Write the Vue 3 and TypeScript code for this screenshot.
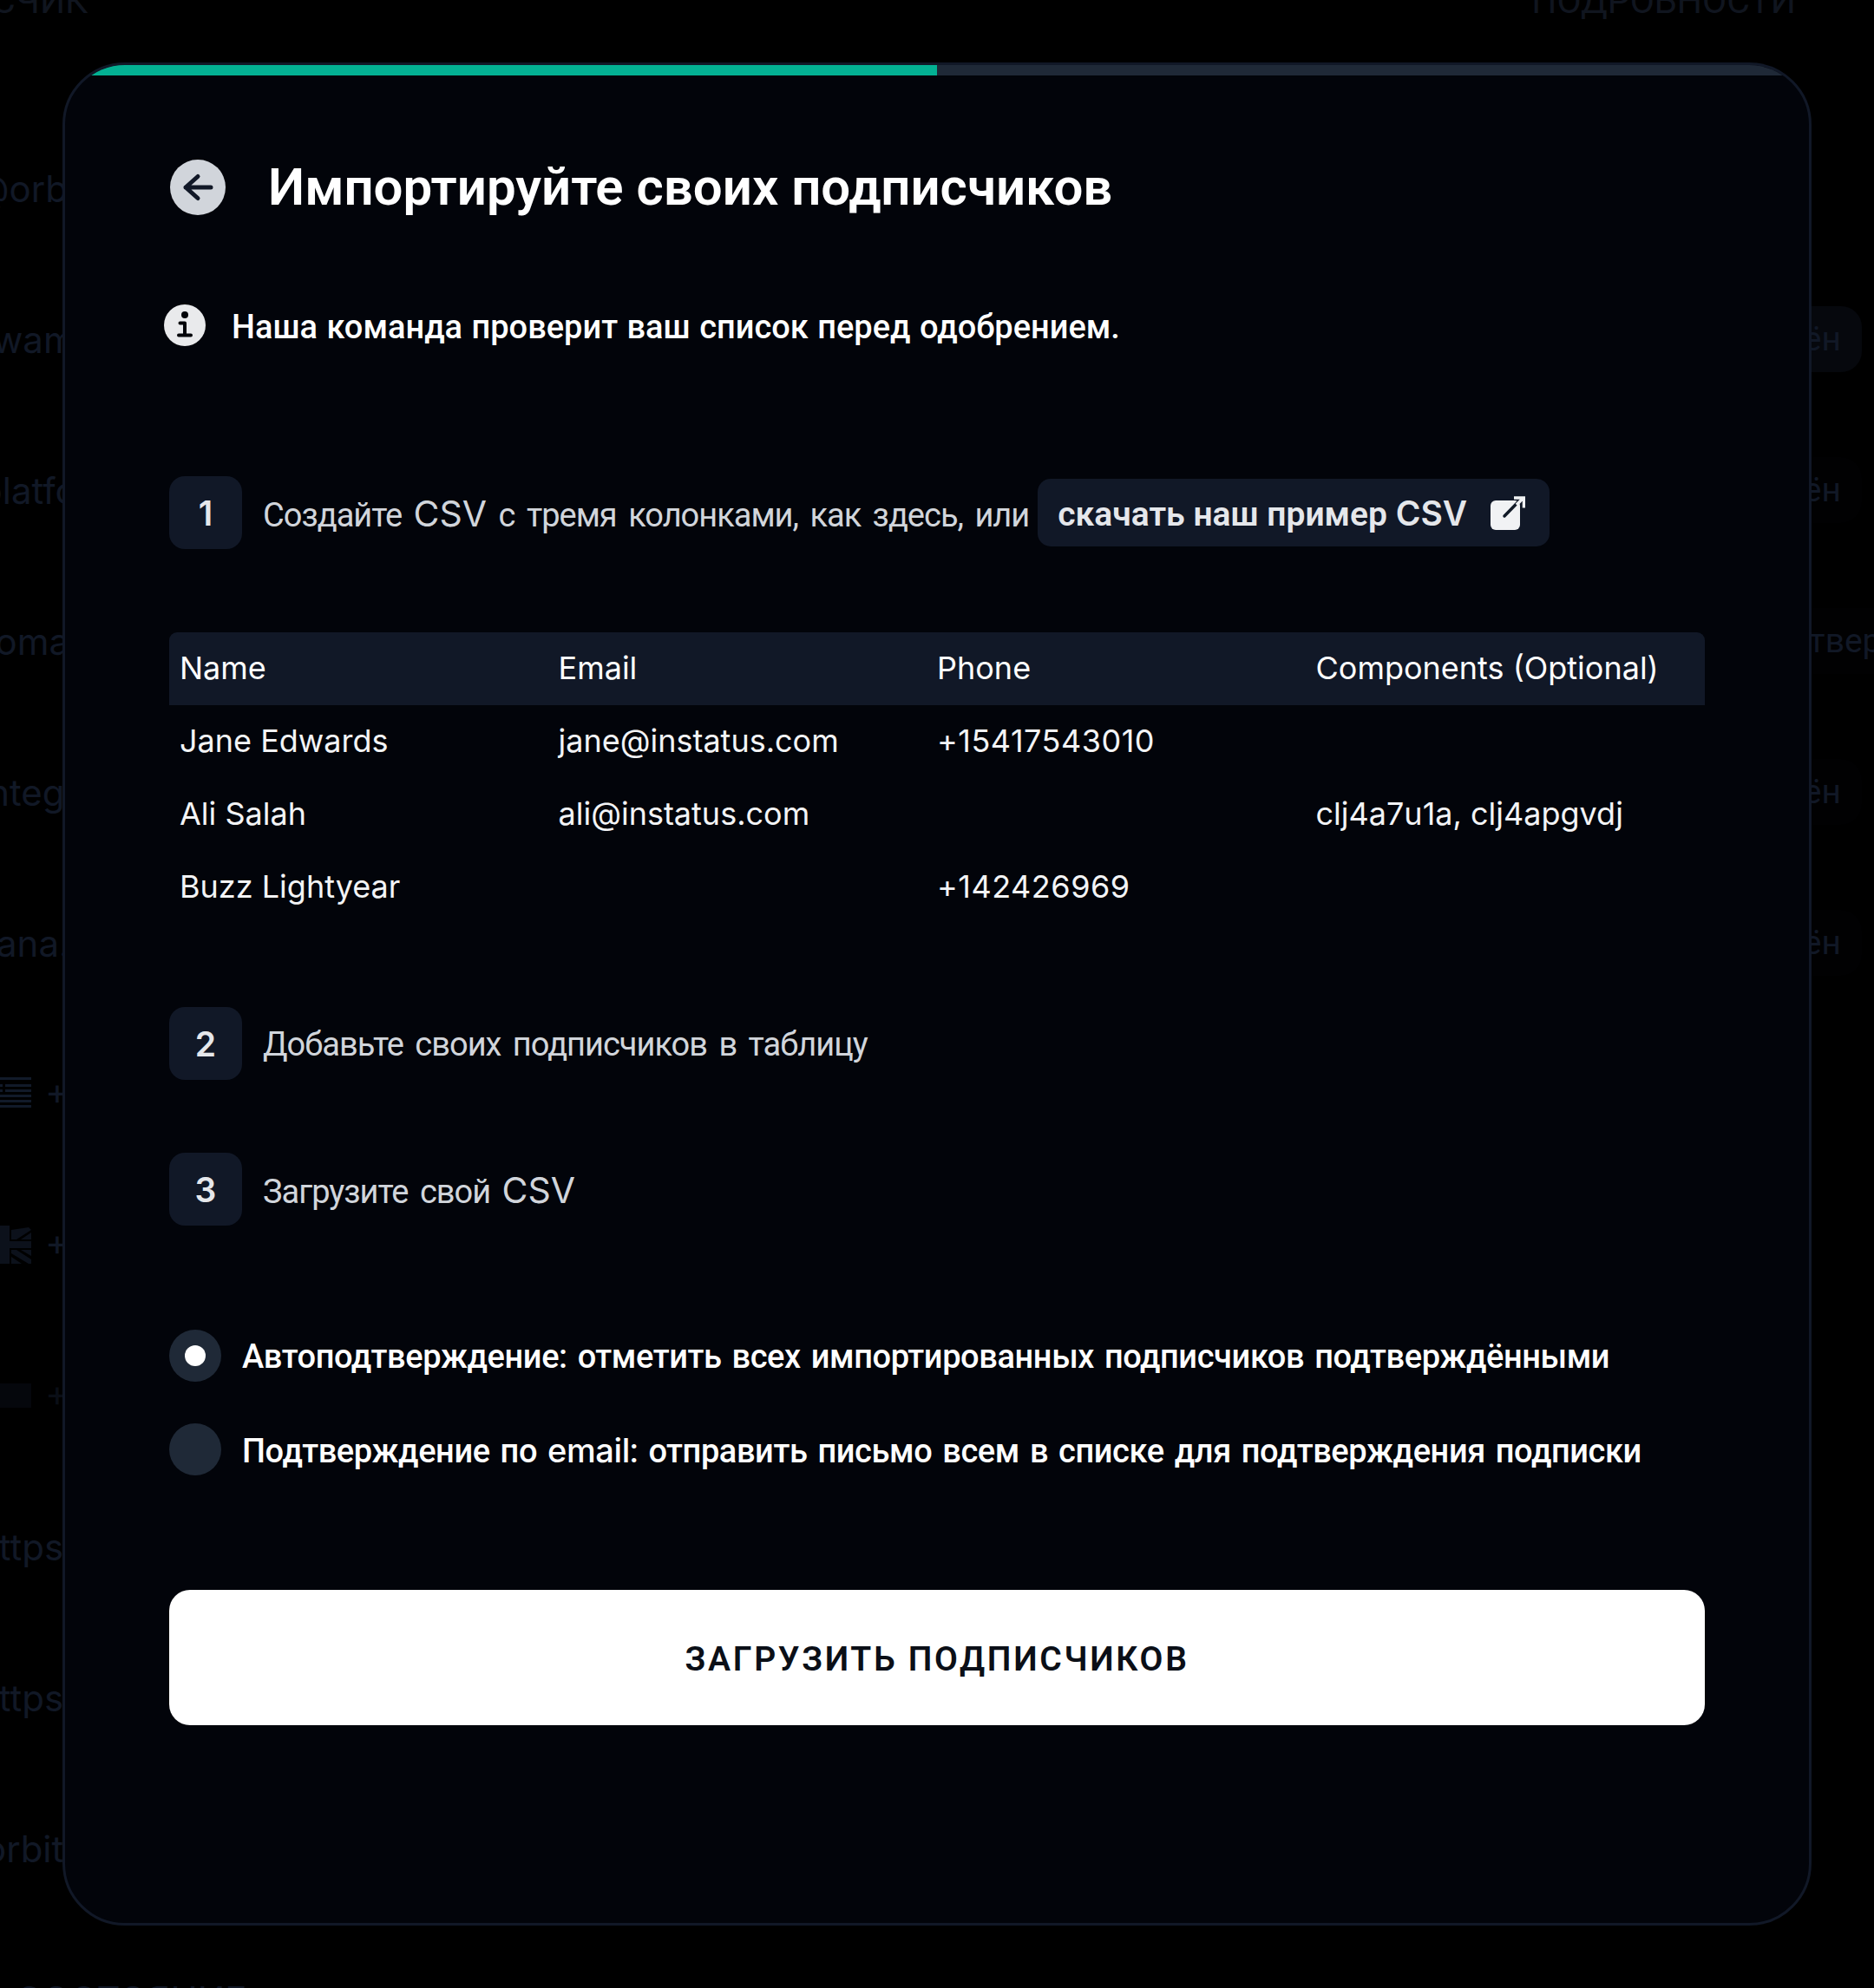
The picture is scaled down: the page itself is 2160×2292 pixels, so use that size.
<script setup lang="ts">
interface BgRow { left: string; offset: number; flag?: 'us' | 'uk' | 'blank'; right?: string; pill?: string; over?: boolean }

const bgRows: BgRow[] = [
  { left: '@orbit.so', offset: -30 },
  { left: 'wamba@orbit.so', offset: -8, right: 'Подтверждён', pill: 'strong' },
  { left: 'platform@orbit.so', offset: -23, right: 'Подтверждён', pill: 'faint' },
  { left: 'thomas@orbit.so', offset: -44, right: 'Подтверждение', pill: 'faint', over: true },
  { left: 'integrations@orbit.so', offset: -24, right: 'Подтверждён', pill: 'faint' },
  { left: 'ana.silva@orbit.so', offset: -4, right: 'Подтверждён', pill: 'faint' },
  { left: '+', offset: 0, flag: 'us' },
  { left: '+', offset: 0, flag: 'uk' },
  { left: '+', offset: 0, flag: 'blank' },
  { left: 'https://orbit.so', offset: -26 },
  { left: 'https://orbit.so', offset: -26 },
  { left: 'orbit.so/hook', offset: -18 },
  { left: 'СОСТОЯНИЕ', offset: 18 },
]

const columns = ['Name', 'Email', 'Phone', 'Components (Optional)']
const rows = [
  ['Jane Edwards', 'jane@instatus.com', '+15417543010', ''],
  ['Ali Salah', 'ali@instatus.com', '', 'clj4a7u1a, clj4apgvdj'],
  ['Buzz Lightyear', '', '+142426969', ''],
]
</script>

<template>
  <div class="page">
    <div class="bg-head">
      <span>ПОДПИСЧИК</span>
      <span class="bg-head-right">ПОДРОБНОСТИ</span>
    </div>
    <div class="bg-rows">
      <div v-for="(r, i) in bgRows" :key="i" class="bg-row">
        <svg v-if="r.flag === 'us'" class="flag" viewBox="0 0 36 38">
          <g fill="#111a29">
            <rect x="0" y="0" width="36" height="3" /><rect x="6" y="8" width="30" height="3" />
            <rect x="6" y="14" width="30" height="3" /><rect x="0" y="20" width="36" height="3" />
            <rect x="0" y="26" width="36" height="3" /><rect x="0" y="32" width="36" height="3" />
            <rect x="0" y="8" width="3" height="3" /><rect x="0" y="14" width="3" height="3" />
          </g>
        </svg>
        <svg v-else-if="r.flag === 'uk'" class="flag" viewBox="0 0 36 44">
          <g fill="#0c111b">
            <rect x="0" y="18" width="36" height="8" /><rect x="0" y="0" width="11" height="44" />
            <path d="M13 16V5L33 2l3 3-17 11zM36 8v8H24z" />
            <path d="M13 28h6l17 11v5h-3L13 32zM24 28h12v7zM13 36l12 8H13z" />
          </g>
        </svg>
        <svg v-else-if="r.flag === 'blank'" class="flag blank" viewBox="0 0 36 28">
          <rect width="36" height="28" fill="#05070c" />
        </svg>
        <span class="bg-left" :class="{ 'on-flag': r.flag, dim: r.flag === 'blank' }" :style="r.flag ? undefined : { marginLeft: r.offset + 'px' }">{{ r.left }}</span>
        <span v-if="r.right" class="bg-right" :class="[r.pill, { over: r.over }]"><b>{{ r.right }}</b></span>
      </div>
    </div>

    <section class="modal">
      <div class="progress"><div class="progress-fill"></div></div>
      <div class="content">
        <header class="title-row">
          <svg class="back" viewBox="0 0 64 64">
            <circle cx="32" cy="32" r="32" fill="#d1d5db" />
            <path d="M18 32h29M32 19.500 18 32l14 12.500" fill="none" stroke="#111827" stroke-width="5" stroke-linecap="round" stroke-linejoin="round" />
          </svg>
          <h1>Импортируйте своих подписчиков</h1>
        </header>

        <div class="info">
          <svg class="info-icon" viewBox="0 0 48 48">
            <circle cx="24" cy="24" r="24" fill="#e9eaec" />
            <circle cx="24" cy="12" r="4" fill="#020409" />
            <path d="M18.500 21.500H24V35M17 35.500h14" fill="none" stroke="#020409" stroke-width="4" stroke-linecap="round" stroke-linejoin="round" />
          </svg>
          <span>Наша команда проверит ваш список перед одобрением.</span>
        </div>

        <div class="step first">
          <span class="badge">1</span>
          <span class="step-text">Создайте <span class="latin">CSV</span> с тремя колонками, как здесь, или</span>
          <a class="link">
            <span>скачать наш пример <span class="latin">CSV</span></span>
            <svg class="ext" viewBox="0 0 40 39">
              <rect x="0" y="5" width="34" height="34" rx="6" fill="#f1f2f4" />
              <path d="M16 23 35 3.500" fill="none" stroke="#111a27" stroke-width="3.500" stroke-linecap="round" />
              <path d="M27 2h11.500v11.500M38 2 30 10" fill="none" stroke="#f1f2f4" stroke-width="3.500" />
            </svg>
          </a>
        </div>

        <div class="table">
          <div class="tr th">
            <div v-for="c in columns" :key="c" class="td">{{ c }}</div>
          </div>
          <div v-for="(row, i) in rows" :key="i" class="tr">
            <div v-for="(cell, j) in row" :key="j" class="td" :class="{ phone: j === 2 }">{{ cell }}</div>
          </div>
        </div>

        <div class="step">
          <span class="badge">2</span>
          <span class="step-text">Добавьте своих подписчиков в таблицу</span>
        </div>
        <div class="step third">
          <span class="badge">3</span>
          <span class="step-text">Загрузите свой <span class="latin">CSV</span></span>
        </div>

        <div class="radios">
          <label class="radio">
            <span class="dot checked"></span>
            <span class="radio-text">Автоподтверждение: отметить всех импортированных подписчиков подтверждёнными</span>
          </label>
          <label class="radio">
            <span class="dot"></span>
            <span class="radio-text">Подтверждение по <span class="latin">email</span>: отправить письмо всем в списке для подтверждения подписки</span>
          </label>
        </div>

        <button class="submit">ЗАГРУЗИТЬ ПОДПИСЧИКОВ</button>
      </div>
    </section>
  </div>
</template>

<style>
html, body { margin: 0; background: #000; }
</style>

<style scoped>
* { box-sizing: border-box; }
.page {
  position: relative;
  width: 2160px;
  height: 2292px;
  overflow: hidden;
  background: #000;
  font-family: Inter, "Liberation Sans", sans-serif;
}
.latin { font-family: Inter, "Liberation Sans", sans-serif; }
.bg-head {
  display: flex;
  justify-content: space-between;
  height: 90px;
  margin-top: -44px;
  padding-right: 90px;
  align-items: center;
  font-family: Roboto, sans-serif;
  font-size: 41px;
  color: #10151f;
  margin-left: -155px;
}
.bg-rows { margin-top: 84px; }
.bg-row {
  display: flex;
  align-items: center;
  height: 174px;
  white-space: nowrap;
  font-size: 42px;
  color: #111826;
}
.bg-left { flex: none; }
.on-flag { margin-left: 16px; margin-bottom: 8px; }
.dim { color: #0a0e16; }
.flag { flex: none; width: 36px; height: auto; }
.bg-right {
  position: absolute;
  right: 14px;
  height: 76px;
  width: 300px;
  display: flex;
  align-items: center;
  justify-content: flex-end;
  padding-right: 24px;
  border-radius: 24px;
  font-family: Roboto, sans-serif;
  font-size: 39px;
  font-weight: 400;
}
.bg-right b { font-weight: 400; }
.strong { background: #06080d; }
.faint { background: #010102; }
.over { right: -133px; padding-right: 0; width: 280px; justify-content: flex-start; padding-left: 0; }

.modal {
  position: absolute;
  left: 72px;
  top: 72px;
  width: 2016px;
  height: 2148px;
  background: #02040a;
  border: 3px solid #111827;
  border-radius: 72px;
  overflow: hidden;
}
.progress { height: 12px; background: #1f2937; }
.progress-fill { width: 50%; height: 100%; background: #03b193; }
.content { padding: 97px 120px 0; color: #fff; }
.title-row { display: flex; align-items: center; height: 64px; gap: 49px; margin-left: 1px; }
.back { width: 64px; height: 64px; flex: none; }
h1 { margin: 0; font-family: Roboto, sans-serif; font-size: 60px; font-weight: 600; line-height: 64px; color: #fff; }
.info {
  display: flex;
  align-items: center;
  gap: 30px;
  height: 48px;
  margin-top: 103px;
  margin-left: -6px;
  font-family: Roboto, sans-serif;
  font-size: 38px;
  font-weight: 500;
  word-spacing: 1px;
}
.info span { padding-top: 4px; }
.info-icon { width: 48px; height: 48px; flex: none; }
.step { display: flex; align-items: center; height: 84px; gap: 24px; }
.step.first { margin-top: 150px; }
.step.third { margin-top: 84px; }
.badge {
  width: 84px;
  height: 84px;
  flex: none;
  display: flex;
  align-items: center;
  justify-content: center;
  background: #111827;
  border-radius: 18px;
  font-size: 39px;
  font-weight: 600;
  color: #e5e7eb;
}
.step-text {
  padding-top: 1px;
  font-family: Roboto, sans-serif;
  font-size: 38px;
  letter-spacing: -1px;
  word-spacing: 5px;
  color: #d1d5db;
}
.step-text .latin { font-size: 41px; letter-spacing: 0; }
.link {
  display: flex;
  align-items: center;
  height: 78px;
  margin-left: -14px;
  padding: 0 28px 0 23px;
  gap: 27px;
  background: #111827;
  border-radius: 15px;
  font-family: Roboto, sans-serif;
  font-size: 39px;
  font-weight: 600;
  color: #e5e7eb;
}
.link > span { padding-top: 2px; }
.ext { width: 40px; height: 39px; flex: none; }
.table { margin: 96px 0; font-size: 36px; color: #f3f4f6; }
.tr { display: grid; grid-template-columns: 436.5px 436.5px 436.5px 1fr; height: 84px; }
.th { background: #111827; border-radius: 9px 9px 0 0; color: #fff; }
.td { display: flex; align-items: center; padding: 0 0 3px 12px; white-space: nowrap; }
.phone { letter-spacing: 0.5px; }
.radios { display: flex; flex-direction: column; gap: 48px; margin-top: 120px; }
.radio { display: flex; align-items: center; height: 60px; gap: 24px; font-family: Roboto, sans-serif; font-size: 38px; font-weight: 500; letter-spacing: -0.4px; word-spacing: 2.9px; white-space: nowrap; }
.radio-text { padding-top: 2px; }
.dot { width: 60px; height: 60px; border-radius: 50%; background: #1f2937; flex: none; display: flex; align-items: center; justify-content: center; }
.dot.checked::after { content: ""; width: 24px; height: 24px; border-radius: 50%; background: #fff; }
.submit {
  display: block;
  width: 100%;
  height: 156px;
  margin-top: 132px;
  padding-top: 4px;
  border: 0;
  border-radius: 24px;
  background: #fff;
  color: #0b0f17;
  font-family: Roboto, sans-serif;
  font-size: 39px;
  font-weight: 600;
  letter-spacing: 2.7px;
}
</style>
